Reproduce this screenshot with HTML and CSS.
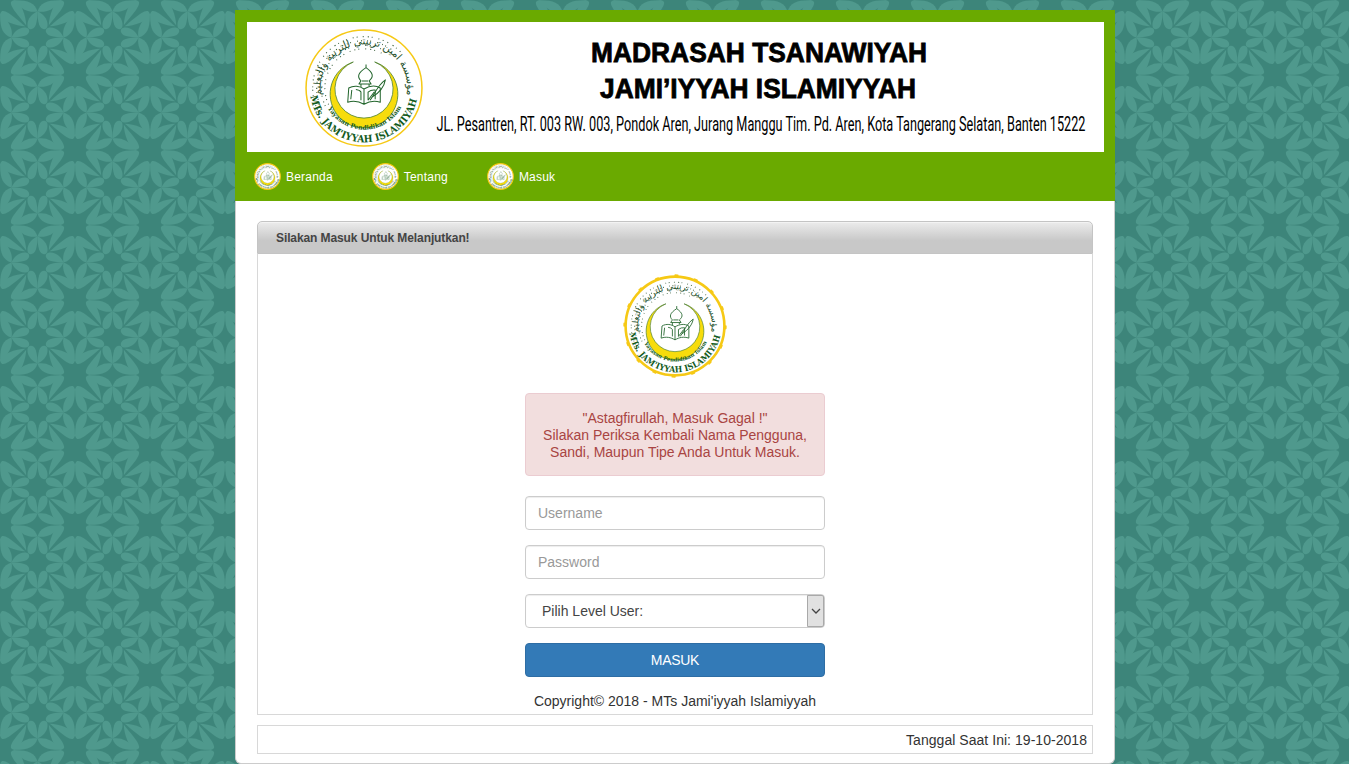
FILE: index.html
```html
<!DOCTYPE html>
<html lang="id">
<head>
<meta charset="utf-8">
<title>MTs Jami'iyyah Islamiyyah</title>
<link rel="stylesheet" href="styles.css">
</head>
<body>
<svg class="defs" width="0" height="0" aria-hidden="true">
  <defs>
    <path id="arc-name" d="M-52.7,8 A53.3 53.3 0 0 0 53,6"/>
    <path id="arc-foundation" d="M-35.5,20 A41 41 0 0 0 38,16"/>
    <path id="arc-arabic" d="M-41,11 A42.5 42.5 0 1 1 41,11"/>
    <symbol id="emblem" viewBox="-60 -60 120 120">
      <circle r="57" class="emblem-disc"/>
      <circle r="58.600" class="bumps"/>
      <circle r="50.5" class="specks specks-a"/>
      <circle r="46.5" class="specks specks-b"/>
      <circle r="42" class="specks specks-c"/>
      <circle r="38.5" class="specks specks-d"/>
      <path class="crescent" d="M-10.5,-25.6 A33.3 33.3 0 1 0 10.5,-25.6 A28.6 28.6 0 1 1 -10.5,-25.6Z"/>
      <g class="book">
        <path d="M-15,0 C-10,-3 -4,-2 0,1 C5,-2 11,-3 16,0 V14 C10,12 5,13 0,16 C-5,13 -10,12 -16,14Z M0,1 V16 M-12,2 L-13,11 M-8,1.5 Q-4,2 -3,4 V12 M4,12 V4 Q7,1.5 11,2 V11 M4,12 L10,4"/>
        <path d="M-5,-4 H7 L5,-7 C10,-11 9,-15 2,-20 C-6,-15 -7,-11 -3,-7Z M2,-20 V-23 M-2,-7 H4 M-3,-4 V-1 M5,-4 V-2"/>
        <path d="M8,9 C11,4 15,-4 21,-8 C20,-2 16,4 8,9 L6,12"/>
      </g>
      <text class="arabic"><textPath href="#arc-arabic" startOffset="50%">مؤسسة امين تربيتي للتربية والتعليم</textPath></text>
      <text class="name"><textPath href="#arc-name" textLength="148" lengthAdjust="spacingAndGlyphs">MTs. JAM'IYYAH ISLAMIYAH</textPath></text>
      <text class="foundation"><textPath href="#arc-foundation" textLength="88" lengthAdjust="spacingAndGlyphs">Yayasan Pendidikan Islam</textPath></text>
    </symbol>
  </defs>
</svg>

<div class="page">
  <header class="header">
    <div class="banner">
      <svg class="banner-logo"><use href="#emblem"/></svg>
      <svg class="banner-text" width="660" height="130">
        <text class="school" x="156" y="39.5" textLength="336" lengthAdjust="spacingAndGlyphs">MADRASAH TSANAWIYAH</text>
        <text class="school" x="165" y="75.5" textLength="316" lengthAdjust="spacingAndGlyphs">JAMI’IYYAH ISLAMIYYAH</text>
        <text class="address" x="1.5" y="108.5" textLength="649" lengthAdjust="spacingAndGlyphs">JL. Pesantren, RT. 003 RW. 003, Pondok Aren, Jurang Manggu Tim. Pd. Aren, Kota Tangerang Selatan, Banten 15222</text>
      </svg>
    </div>
    <nav class="nav">
      <a><svg><use href="#emblem"/></svg>Beranda</a>
      <a><svg><use href="#emblem"/></svg>Tentang</a>
      <a><svg><use href="#emblem"/></svg>Masuk</a>
    </nav>
  </header>

  <main class="content">
    <section class="panel">
      <h1 class="panel-title">Silakan Masuk Untuk Melanjutkan!</h1>
      <div class="panel-body">
        <svg class="login-logo"><use href="#emblem"/></svg>
        <div class="alert">"Astagfirullah, Masuk Gagal !"<br>Silakan Periksa Kembali Nama Pengguna, Sandi, Maupun Tipe Anda Untuk Masuk.</div>
        <form class="form">
          <input class="control" type="text" placeholder="Username">
          <input class="control" type="password" placeholder="Password">
          <div class="control select">
            <span>Pilih Level User:</span>
            <span class="arrow"><svg width="10" height="6" viewBox="0 0 10 6"><path d="M1,1 L5,5 L9,1"/></svg></span>
          </div>
          <button class="submit" type="button">MASUK</button>
        </form>
        <p class="copyright">Copyright© 2018 - MTs Jami'iyyah Islamiyyah</p>
      </div>
    </section>
    <footer class="date">Tanggal Saat Ini: 19-10-2018</footer>
  </main>
</div>
</body>
</html>
```
FILE: styles.css
```css
* { box-sizing: border-box; }

body {
  margin: 0;
  height: 764px;
  overflow: hidden;
  padding-top: 10px;
  font: 14px/20px "Liberation Sans", Arial, sans-serif;
  color: #333;
  background: #3d857a url("data:image/svg+xml,%3Csvg xmlns='http://www.w3.org/2000/svg' xmlns:xlink='http://www.w3.org/1999/xlink' width='75' height='75' viewBox='-112.5 -112.5 225 225'%3E%3Cdefs%3E%3Cg id='o'%3E%3Cpath d='M0,78C-14,72 -31,58 -30,36C-29,20 -10,22 -5,38C-1,52 0,66 0,78Z'/%3E%3Cpath d='M0,78C-22,74 -44,80 -73,112C-30,113 -8,105 0,78Z'/%3E%3Cpath d='M-34,36C-42,50 -86,92 -79,107C-70,117 -55,108 -45,85C-38,68 -34,50 -34,36Z'/%3E%3C/g%3E%3Cg id='p'%3E%3Cuse xlink:href='%23o'/%3E%3Cuse xlink:href='%23o' transform='scale(-1 1)'/%3E%3C/g%3E%3C/defs%3E%3Cg fill='%234f998d'%3E%3Cuse xlink:href='%23p'/%3E%3Cuse xlink:href='%23p' transform='rotate(90)'/%3E%3Cuse xlink:href='%23p' transform='rotate(180)'/%3E%3Cuse xlink:href='%23p' transform='rotate(270)'/%3E%3C/g%3E%3C/svg%3E") 0 0 / 75px 75px;
}

.defs { position: absolute; }

.page {
  width: 880px;
  height: 754px;
  margin-left: 235px;
  background: #fff;
  border: 1px solid #ccc;
  border-width: 0 1px 1px;
  border-radius: 0 0 6px 6px;
}

.header {
  height: 191px;
  margin: 0 -1px;
  padding: 12px 11px 0 12px;
  background: #6aaa00;
}

.banner {
  display: flex;
  height: 130px;
  padding-left: 56px;
  background: #fff;
}
.banner-logo { width: 122px; height: 122px; margin-top: 5px; }
.banner-text { margin-left: 10px; overflow: visible; }
.school { font: bold 28px "Liberation Sans", Arial, sans-serif; stroke: #000; stroke-width: .8px; }
.address { font: 19.5px Roboto, "Liberation Sans", sans-serif; }

.nav {
  display: flex;
  height: 49px;
  padding: 0 0 0 7px;
  color: #fff;
  font-size: 12px;
}
.nav a { display: flex; align-items: center; margin-right: 39px; letter-spacing: .2px; }
.nav svg { --ring: 5px; --speck: 2px; width: 27px; height: 27px; margin-right: 5px; }

.emblem-disc { fill: #fff; stroke: #f6c915; stroke-width: var(--ring, 1.5px); }
.bumps { fill: none; stroke: #f6c915; stroke-width: var(--bump, 0); stroke-dasharray: 3 20; stroke-linecap: round; }
.specks { fill: none; stroke: #355c38; stroke-width: var(--speck, 1.1px); transform: rotate(-205deg); }
.specks-a { stroke-dasharray: .9 3.1 .9 5 1.2 3 .8 4.5 1 2.3 .9 6 .9 3 1 5 .9 4 1.1 2.8 .8 6 .9 3.5 1 4 .9 5 1.2 3 .8 4.5 1 2.3 .9 6 .9 3 1 5 .9 4 1.1 2.8 .8 6 .9 3.5 1 4 .9 5 1.2 3 .8 4 1 400; }
.specks-b { stroke-dasharray: 1.2 4 .8 2.5 1 6 .9 3 1.1 5 .9 2 1 6 1.2 4 .8 2.5 1 6 .9 3 1.1 5 .9 2 1 6 1.2 4 .8 2.5 1 6 .9 3 1.1 5 .9 2 1 6 1.2 4 .8 2.5 1 5 1 400; }
.specks-c { stroke-dasharray: .9 3 1 5 .8 4 1 2.5 .9 6 .9 3 1 5 .8 4 1 2.5 .9 6 .9 3 1 5 .8 4 1 2.5 .9 6 .9 3 1 5 .8 4 1 2.5 .9 6 .9 400; }
.specks-d { stroke-dasharray: .8 4 1 3 .9 6 .8 4 1 3 .9 6 .8 4 1 3 .9 6 .8 4 1 3 .9 6 .8 4 1 3 .9 6 .8 4 1 3 .9 6 .8 400; }
.crescent { fill: #f7dc0c; stroke: #4f8236; stroke-width: .8px; }
.book { fill: none; stroke: #22652c; stroke-width: 1px; stroke-linejoin: round; }
.arabic { font: 10px "DejaVu Sans", sans-serif; fill: #234f29; text-anchor: middle; }
.name { font: bold 9.8px "DejaVu Serif", serif; fill: #125a20; }
.foundation { font: bold 6px "DejaVu Serif", serif; fill: #125a20; }

.content { padding: 20px 21px 0; }

.panel-title {
  height: 33px;
  margin: 0;
  padding-left: 18px;
  border: 1px solid #c4c4c4;
  border-radius: 5px 5px 0 0;
  box-shadow: inset 0 1px #f3f3f3;
  background: linear-gradient(#ececec, #c8c8c8 60%, #c8c8c8);
  font-size: 12px;
  letter-spacing: -.1px;
  line-height: 32px;
  color: #444;
}

.panel-body {
  display: flex;
  flex-direction: column;
  align-items: center;
  height: 461px;
  padding-top: 20px;
  border: 1px solid #d8d8d8;
  border-top: 0;
}
.login-logo { --ring: 3px; --bump: 2px; width: 104px; height: 104px; flex: none; }

.alert {
  width: 300px;
  margin: 15px 0 20px;
  padding: 16px 15px 14px;
  border: 1px solid #ebccd1;
  border-radius: 4px;
  background: #f2dede;
  color: #a94442;
  line-height: 17px;
  text-align: center;
}

.form { display: flex; flex-direction: column; gap: 15px; width: 300px; }
.control {
  height: 34px;
  padding: 6px 12px;
  border: 1px solid #ccc;
  border-radius: 4px;
  box-shadow: inset 0 1px 1px rgba(0, 0, 0, .075);
  background: #fff;
  font: inherit;
  color: #444;
}
.control::placeholder { color: #999; opacity: 1; }
.select { display: flex; align-items: center; justify-content: space-between; padding: 0 0 0 16px; }
.arrow {
  display: flex;
  align-items: center;
  justify-content: center;
  width: 17px;
  height: 32px;
  border: 1px solid #a9a9a9;
  border-radius: 0 2px 2px 0;
  background: #e1e1e1;
}
.arrow svg { flex: none; }
.arrow path { fill: none; stroke: #444; stroke-width: 1.3px; }
.submit {
  height: 34px;
  padding: 0;
  border: 1px solid #2e6da4;
  border-radius: 4px;
  background: #337ab7;
  color: #fff;
  font: inherit;
  letter-spacing: -.3px;
}
.copyright { margin: 14px 0 0; }

.date {
  height: 29px;
  margin-top: 10px;
  padding-right: 5px;
  border: 1px solid #d8d8d8;
  letter-spacing: .04px;
  line-height: 28px;
  text-align: right;
}
```
